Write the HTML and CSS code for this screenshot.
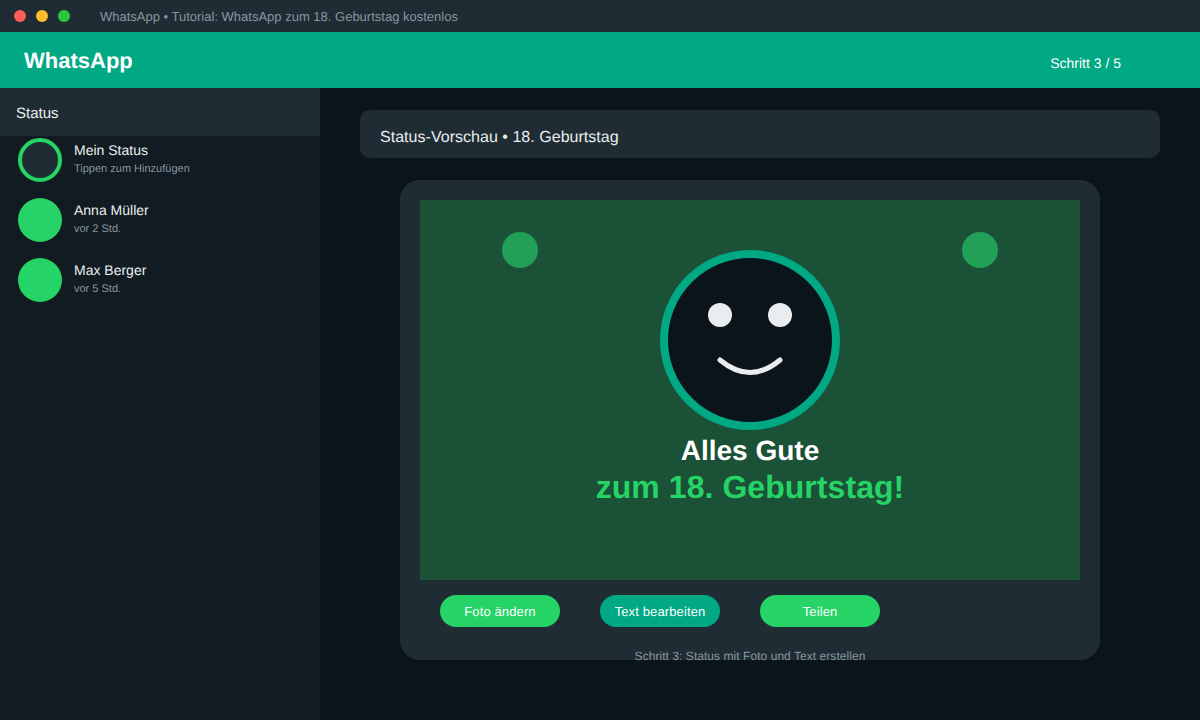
FILE: index.html
```html
<!DOCTYPE html>
<html lang="de">
<head>
  <meta charset="UTF-8" />
  <title>WhatsApp zum 18. Geburtstag</title>
  <link rel="stylesheet" href="styles.css">
</head>
<body>
  <div class="titlebar">
    <div class="lights">
      <span class="light red"></span>
      <span class="light yellow"></span>
      <span class="light green"></span>
    </div>
    <span class="window-title">WhatsApp • Tutorial: WhatsApp zum 18. Geburtstag kostenlos</span>
  </div>

  <header class="topbar">
    <h1>WhatsApp</h1>
    <span class="step">Schritt 3 / 5</span>
  </header>

  <div class="main">
    <aside class="sidebar">
      <div class="sidebar-head">Status</div>
      <div class="status-list">
        <div class="status-row">
          <div class="avatar avatar-empty"></div>
          <div class="status-text">
            <div class="status-name">Mein Status</div>
            <div class="status-sub">Tippen zum Hinzufügen</div>
          </div>
        </div>
        <div class="status-row">
          <div class="avatar"></div>
          <div class="status-text">
            <div class="status-name">Anna Müller</div>
            <div class="status-sub">vor 2 Std.</div>
          </div>
        </div>
        <div class="status-row">
          <div class="avatar"></div>
          <div class="status-text">
            <div class="status-name">Max Berger</div>
            <div class="status-sub">vor 5 Std.</div>
          </div>
        </div>
      </div>
    </aside>

    <main class="content">
      <div class="preview-title">Status-Vorschau • 18. Geburtstag</div>

      <div class="card">
        <div class="photo">
          <span class="dot dot-left"></span>
          <span class="dot dot-right"></span>
          <svg class="face" width="180" height="180" viewBox="0 0 180 180">
            <circle cx="90" cy="90" r="86" fill="#0b141a" stroke="#00a884" stroke-width="8" />
            <circle cx="60" cy="65" r="12" fill="#e9edef" />
            <circle cx="120" cy="65" r="12" fill="#e9edef" />
            <path d="M60 110 Q90 135 120 110" fill="none" stroke="#e9edef" stroke-width="5" stroke-linecap="round" />
          </svg>
          <div class="wish">Alles Gute</div>
          <div class="wish-big">zum 18. Geburtstag!</div>
        </div>
        <div class="actions">
          <button class="btn">Foto ändern</button>
          <button class="btn btn-teal">Text bearbeiten</button>
          <button class="btn">Teilen</button>
        </div>
        <p class="caption">Schritt 3: Status mit Foto und Text erstellen</p>
      </div>
    </main>
  </div>
</body>
</html>
```

FILE: styles.css
```css
* {
  box-sizing: border-box;
  text-rendering: geometricPrecision;
}
body {
  margin: 0;
  height: 720px;
  overflow: hidden;
  display: flex;
  flex-direction: column;
  font-family: "Liberation Sans", Arial, sans-serif;
  background-color: #0b141a;
  color: #e9edef;
}
.titlebar {
  height: 32px;
  display: flex;
  align-items: center;
  padding-left: 14px;
  background-color: #202c33;
}
.lights {
  display: flex;
  gap: 10px;
}
.light {
  width: 12px;
  height: 12px;
  border-radius: 50%;
}
.red { background-color: #ff5f57; }
.yellow { background-color: #febc2e; }
.green { background-color: #28c840; }
.window-title {
  margin-left: 30px;
  font-size: 13px;
  color: #8696a0;
}
.topbar {
  height: 56px;
  display: flex;
  align-items: center;
  justify-content: space-between;
  padding: 6px 79px 0 24px;
  background-color: #00a884;
  color: white;
}
.topbar h1 {
  margin: 0 0 4px;
  font-size: 22px;
  font-weight: bold;
}
.step {
  font-size: 14px;
}
.main {
  flex: 1;
  display: flex;
}
.sidebar {
  width: 320px;
  background-color: #111b21;
}
.sidebar-head {
  height: 48px;
  padding: 3px 0 0 16px;
  display: flex;
  align-items: center;
  font-size: 15px;
  background-color: #202c33;
}
.status-list {
  display: flex;
  flex-direction: column;
  gap: 16px;
  padding: 2px 0 0 18px;
}
.status-row {
  display: flex;
  align-items: center;
  gap: 12px;
}
.status-text {
  padding-bottom: 2px;
}
.avatar {
  width: 44px;
  height: 44px;
  border-radius: 50%;
  background-color: #25d366;
}
.avatar-empty {
  background-color: #202c33;
  border: 4px solid #25d366;
}
.status-name {
  font-size: 14px;
  line-height: 16px;
}
.status-sub {
  margin-top: 5px;
  font-size: 11px;
  line-height: 13px;
  color: #8696a0;
}
.content {
  flex: 1;
  display: flex;
  flex-direction: column;
  align-items: flex-start;
  padding: 22px 0 0 40px;
}
.preview-title {
  width: 800px;
  height: 48px;
  display: flex;
  align-items: center;
  padding: 7px 20px 0;
  font-size: 16px;
  letter-spacing: 0.03px;
  border-radius: 10px;
  background-color: #202c33;
}
.card {
  width: 700px;
  height: 480px;
  margin: 22px 0 0 40px;
  padding: 20px 20px 0;
  border-radius: 20px;
  background-color: #202c33;
}
.photo {
  position: relative;
  height: 380px;
  display: flex;
  flex-direction: column;
  align-items: center;
  padding-top: 50px;
  background-color: #1b5137;
}
.dot {
  position: absolute;
  top: 32px;
  width: 36px;
  height: 36px;
  border-radius: 50%;
  background-color: #23a057;
}
.dot-left { left: 82px; }
.dot-right { right: 82px; }
.face {
  display: block;
}
.wish {
  margin-top: 4px;
  font-size: 28px;
  line-height: 34px;
  font-weight: bold;
  color: white;
}
.wish-big {
  margin-top: 1px;
  font-size: 32px;
  line-height: 36px;
  font-weight: bold;
  letter-spacing: 0.05px;
  color: #25d366;
}
.actions {
  display: flex;
  gap: 40px;
  padding: 15px 0 0 20px;
}
.btn {
  width: 120px;
  height: 32px;
  padding: 0;
  border: none;
  border-radius: 16px;
  font-family: inherit;
  font-size: 13px;
  letter-spacing: 0.12px;
  color: white;
  background-color: #25d366;
}
.btn-teal {
  background-color: #00a884;
}
.caption {
  margin: 22px 0 0;
  text-align: center;
  font-size: 12px;
  line-height: 14px;
  letter-spacing: 0.05px;
  color: #8696a0;
}
```
